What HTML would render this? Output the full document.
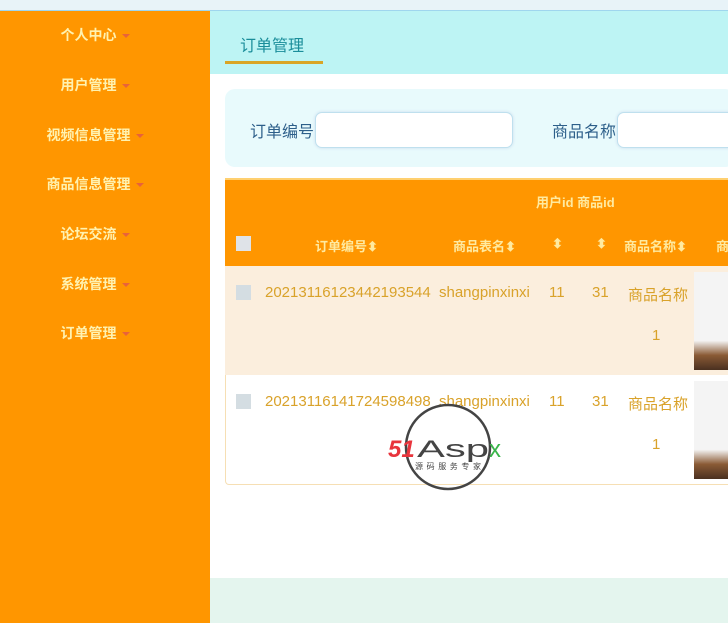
<!DOCTYPE html><html><head><meta charset="utf-8"><style>
*{margin:0;padding:0;box-sizing:border-box}
body{width:728px;height:623px;overflow:hidden;background:#fff;font-family:"Liberation Sans","Noto Sans CJK SC",sans-serif;position:relative}
.top{position:absolute;left:0;top:0;width:728px;height:11px;background:#e8f3f8;border-bottom:1px solid #9fd6ee}
.side{position:absolute;left:0;top:11px;width:210px;height:612px;background:#ff9600}
.side div{position:absolute;left:0;width:190px;text-align:center;color:#fff2b0;font-size:14px;font-weight:bold}
.side div:after{content:"";display:inline-block;margin-left:5px;vertical-align:middle;border:4px solid transparent;border-top:4px solid #e8623a;border-bottom:0}
.hdr{position:absolute;left:210px;top:11px;width:518px;height:63px;background:#bdf4f4}
.tab{position:absolute;left:240px;top:32px;font-size:16px;color:#1a8d9a}
.ul{position:absolute;left:225px;top:61px;width:98px;height:3px;background:#d9a526}
.srch{position:absolute;left:225px;top:89px;width:510px;height:78px;background:#e8fafc;border-radius:10px}
.lbl{position:absolute;font-size:16px;color:#2d5f8a;top:119px}
.inp{position:absolute;top:112px;height:36px;background:#fff;border:1px solid #bfe0ee;border-radius:7px;box-shadow:0 0 3px #cde}
.th{position:absolute;left:225px;top:178px;width:510px;height:88px;background:#ff9600;border-top:2px solid #ffd070}
.h{position:absolute;color:#ffeaa0;font-size:13px;font-weight:bold}
.r1{position:absolute;left:225px;top:266px;width:510px;height:109px;background:#fbeedd}
.r2{position:absolute;left:225px;top:375px;width:510px;height:110px;background:#fff;border:1px solid #f6dfb4;border-top:0;border-radius:0 0 4px 4px}
.c{position:absolute;color:#d9a22a;font-size:15px}
.cb{position:absolute;width:15px;height:15px;background:#d4dde2}
.img{position:absolute;left:694px;width:40px;background:linear-gradient(#f4f4f4 70%,#8a5a35 85%,#4a3020)}
.bot{position:absolute;left:210px;top:578px;width:518px;height:45px;background:#e4f5ee}
</style></head><body>
<div class="top"></div>
<div class="side">
<div style="top:14px">个人中心</div><div style="top:64px">用户管理</div><div style="top:114px">视频信息管理</div><div style="top:163px">商品信息管理</div><div style="top:213px">论坛交流</div><div style="top:263px">系统管理</div><div style="top:312px">订单管理</div>
</div>
<div class="hdr"></div><div class="tab">订单管理</div><div class="ul"></div>
<div class="srch"></div>
<div class="lbl" style="left:250px;top:118px">订单编号</div><div class="inp" style="left:315px;width:198px"></div>
<div class="lbl" style="left:552px;top:118px">商品名称</div><div class="inp" style="left:617px;width:130px"></div>
<div class="th"></div>
<div class="h" style="left:536px;top:192px">用户id 商品id</div>
<div class="cb" style="left:236px;top:236px;background:#dfe3e8"></div>
<div class="h" style="left:315px;top:236px">订单编号⬍</div>
<div class="h" style="left:453px;top:236px">商品表名⬍</div>
<div class="h" style="left:552px;top:236px">⬍</div>
<div class="h" style="left:596px;top:236px">⬍</div>
<div class="h" style="left:624px;top:236px">商品名称⬍</div>
<div class="h" style="left:716px;top:236px">商</div>
<div class="r1"></div><div class="r2"></div>
<div class="cb" style="left:236px;top:285px"></div>
<div class="c" style="left:265px;top:284px">20213116123442193544</div>
<div class="c" style="left:439px;top:284px">shangpinxinxi</div>
<div class="c" style="left:549px;top:284px">11</div><div class="c" style="left:592px;top:284px">31</div>
<div class="c" style="left:628px;top:284px">商品名称</div><div class="c" style="left:652px;top:327px">1</div>
<div class="img" style="top:272px;height:98px"></div>
<div class="cb" style="left:236px;top:394px"></div>
<div class="c" style="left:265px;top:393px">20213116141724598498</div>
<div class="c" style="left:439px;top:393px">shangpinxinxi</div>
<div class="c" style="left:549px;top:393px">11</div><div class="c" style="left:592px;top:393px">31</div>
<div class="c" style="left:628px;top:393px">商品名称</div><div class="c" style="left:652px;top:436px">1</div>
<div class="img" style="top:381px;height:98px"></div>
<svg style="position:absolute;left:385px;top:402px" width="130" height="92"><circle cx="63" cy="45" r="42" fill="none" stroke="#444" stroke-width="2.5"/><text x="3" y="55" font-family="Liberation Sans" font-style="italic" font-weight="bold" font-size="24" fill="#e8343c">51</text><text x="32" y="55" font-family="Liberation Sans" font-size="24" fill="#444" textLength="72" lengthAdjust="spacingAndGlyphs">Asp</text><text x="104" y="55" font-family="Liberation Sans" font-size="24" fill="#3ab54a">x</text><text x="30" y="67" font-size="8" fill="#444" font-family="Noto Sans CJK SC" textLength="66">源码服务专家</text></svg>
<div class="bot"></div>
</body></html>
